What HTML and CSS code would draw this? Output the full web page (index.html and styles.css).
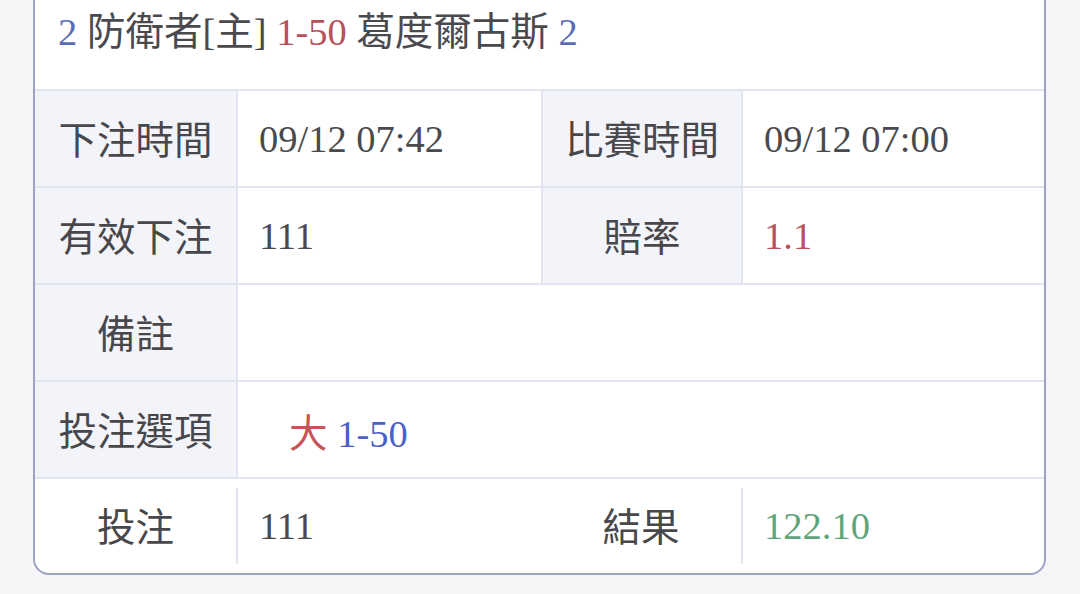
FILE: index.html
```html
<!DOCTYPE html>
<html lang="zh-Hant">
<head>
<meta charset="utf-8">
<title>注單</title>
<link rel="stylesheet" href="styles.css">
</head>
<body>
<div class="card">
  <div class="head">
    <span class="blue">2</span> 防衛者[主] <span class="red">1-50</span> 葛度爾古斯 <span class="blue">2</span>
  </div>
  <div class="row">
    <div class="lbl">下注時間</div>
    <div class="val">09/12 07:42</div>
    <div class="lbl">比賽時間</div>
    <div class="val">09/12 07:00</div>
  </div>
  <div class="row">
    <div class="lbl">有效下注</div>
    <div class="val">111</div>
    <div class="lbl">賠率</div>
    <div class="val red">1.1</div>
  </div>
  <div class="row">
    <div class="lbl">備註</div>
    <div class="val span3"></div>
  </div>
  <div class="row">
    <div class="lbl">投注選項</div>
    <div class="val span3"><span class="opt"><span class="red2">大</span> <span class="blue2">1-50</span></span></div>
  </div>
  <div class="row last">
    <div class="lbl plain">投注</div>
    <div class="val">111</div>
    <div class="lbl plain nodiv">結果</div>
    <div class="val green">122.10</div>
  </div>
</div>
</body>
</html>
```
FILE: styles.css
```css
html, body {
  margin: 0;
  padding: 0;
  background: #f5f5f7;
}
body {
  font-family: "Liberation Serif", "Noto Sans CJK TC", serif;
  color: #4a4a4e;
  width: 1080px;
  height: 594px;
  overflow: hidden;
}
.card {
  margin: -30px 0 0 33px;
  width: 1013px;
  box-sizing: border-box;
  background: #ffffff;
  border: 2px solid #9fa2c7;
  border-radius: 16px;
  overflow: hidden;
}
.head {
  height: 117px;
  box-sizing: border-box;
  padding: 38px 0 0 23px;
  font-size: 38.5px;
  line-height: 44px;
  white-space: nowrap;
}
.blue { color: #5a6cb8; }
.red { color: #b9505b; }
.red2 { color: #c65458; }
.blue2 { color: #4c5fc9; }
.green { color: #5ea57b; }
.row {
  display: grid;
  grid-template-columns: 201px 305px 200px 1fr;
  height: 97px;
  box-sizing: border-box;
  border-top: 2px solid #e2e4f1;
  font-size: 38.5px;
}
.lbl {
  background: #f3f4fa;
  display: flex;
  align-items: center;
  justify-content: center;
  padding-bottom: 4px;
  border-left: 2px solid #e2e4f1;
  font-family: "Noto Sans CJK TC", sans-serif;
  color: #48484c;
}
.row > .lbl:first-child { border-left: none; }
.val {
  display: flex;
  align-items: center;
  padding-left: 21px;
  border-left: 2px solid #e2e4f1;
  white-space: nowrap;
}
.span3 { grid-column: 2 / 5; }
.opt { margin-left: 30px; }
.opt .red2 { font-family: "Noto Sans CJK TC", sans-serif; }
.row.last {
  height: 96px;
  padding: 9px 0 9px 0;
}
.lbl.plain { background: #ffffff; }
.lbl.nodiv { border-left: none; }
```
